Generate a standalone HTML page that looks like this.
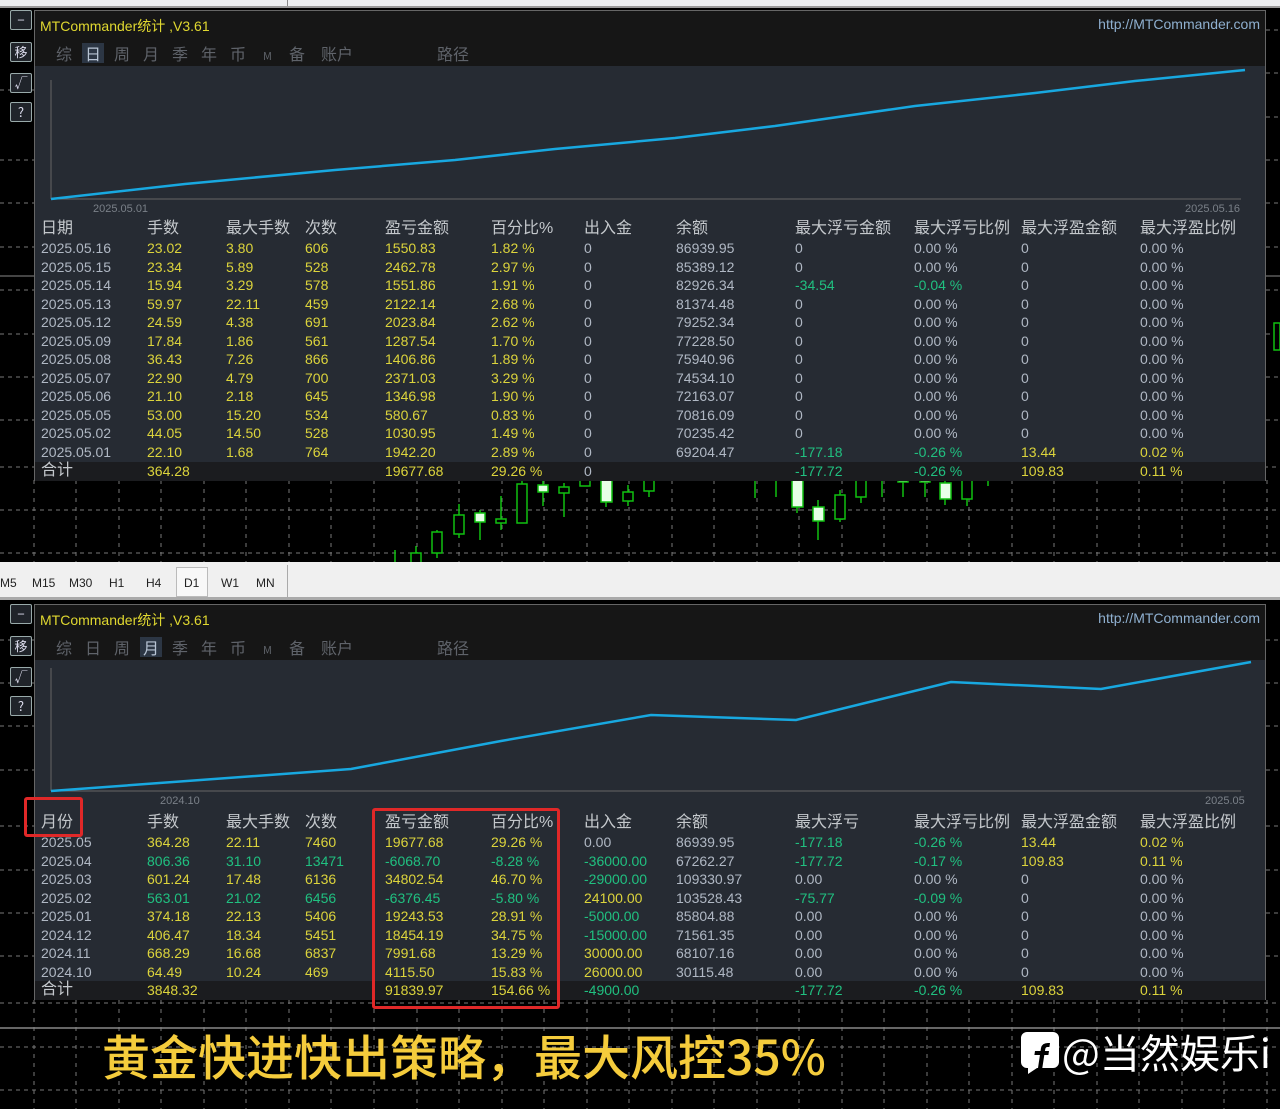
<!DOCTYPE html>
<html><head><meta charset="utf-8"><style>
*{margin:0;padding:0;box-sizing:border-box}
body{width:1280px;height:1109px;background:#000;position:relative;overflow:hidden;font-family:"Liberation Sans","Noto Sans CJK SC",sans-serif}
.a{position:absolute}
.panel{position:absolute;left:34px;width:1232px;background:#262b33;border:1px solid #666}
.hdr{position:absolute;left:0;top:0;width:100%;height:55px;background:#161616}
.title{position:absolute;left:5px;top:5px;color:#e0d830;font-size:14px}
.url{position:absolute;right:5px;top:5px;color:#8fb0d0;font-size:14px}
.tab{position:absolute;top:32px;color:#5f636a;font-size:16px;font-family:"Noto Sans CJK SC",sans-serif;line-height:20px}
.tab.on{background:#2c3644;color:#b8c4d4;padding:0 3px;margin-left:-3px}
.row{position:absolute;left:0;width:100%;height:18.5px;font-size:14px;line-height:18.5px;color:#b0b8c4}
.row span{position:absolute;top:0;white-space:nowrap}
.h{font-family:"Liberation Sans","Noto Sans CJK SC",sans-serif;font-size:16px;color:#c4c8cc}
.tot{background:#1b1c1f}
.y{color:#dcd43c}.g{color:#20c080}
.c1{left:6px}.c2{left:112px}.c3{left:191px}.c4{left:270px}.c5{left:350px}.c6{left:456px}.c7{left:549px}.c8{left:641px}.c9{left:760px}.c10{left:879px}.c11{left:986px}.c12{left:1105px}
.btn{position:absolute;left:10px;width:22px;height:20px;border:1px solid #9aa;border-radius:2px;background:#20242a;color:#dde;font-size:13px;text-align:center;line-height:18px;font-family:"Noto Sans CJK SC",sans-serif}
.tb{position:absolute;top:576px;font-size:12px;color:#222}
</style></head><body>
<svg class="a" style="left:0;top:0" width="1280" height="1109">
<g stroke="#777" stroke-dasharray="4,4" stroke-width="1">
<line x1="0" y1="467" x2="1280" y2="467"/><line x1="0" y1="510" x2="1280" y2="510"/><line x1="0" y1="553" x2="1280" y2="553"/>
<line x1="0" y1="90" x2="34" y2="90"/><line x1="0" y1="160" x2="34" y2="160"/><line x1="0" y1="203" x2="34" y2="203"/><line x1="0" y1="247" x2="34" y2="247"/><line x1="0" y1="290" x2="34" y2="290"/><line x1="0" y1="334" x2="34" y2="334"/><line x1="0" y1="377" x2="34" y2="377"/><line x1="0" y1="420" x2="34" y2="420"/>
<line x1="1266" y1="30" x2="1280" y2="30"/><line x1="1266" y1="73" x2="1280" y2="73"/><line x1="1266" y1="117" x2="1280" y2="117"/><line x1="1266" y1="160" x2="1280" y2="160"/><line x1="1266" y1="203" x2="1280" y2="203"/><line x1="1266" y1="247" x2="1280" y2="247"/><line x1="1266" y1="290" x2="1280" y2="290"/><line x1="1266" y1="334" x2="1280" y2="334"/><line x1="1266" y1="377" x2="1280" y2="377"/><line x1="1266" y1="420" x2="1280" y2="420"/>
<line x1="0" y1="640" x2="34" y2="640"/><line x1="0" y1="683" x2="34" y2="683"/><line x1="0" y1="726" x2="34" y2="726"/><line x1="0" y1="770" x2="34" y2="770"/><line x1="0" y1="826" x2="34" y2="826"/><line x1="0" y1="870" x2="34" y2="870"/><line x1="0" y1="913" x2="34" y2="913"/><line x1="0" y1="956" x2="34" y2="956"/>
<line x1="1266" y1="640" x2="1280" y2="640"/><line x1="1266" y1="683" x2="1280" y2="683"/><line x1="1266" y1="726" x2="1280" y2="726"/><line x1="1266" y1="770" x2="1280" y2="770"/><line x1="1266" y1="826" x2="1280" y2="826"/><line x1="1266" y1="870" x2="1280" y2="870"/><line x1="1266" y1="913" x2="1280" y2="913"/><line x1="1266" y1="956" x2="1280" y2="956"/>
<line x1="0" y1="1003" x2="1280" y2="1003"/><line x1="0" y1="1047" x2="1280" y2="1047"/><line x1="0" y1="1090" x2="1280" y2="1090"/>
</g>
<g stroke="#777" stroke-dasharray="4,5" stroke-width="1">
<line x1="34" y1="480" x2="34" y2="562"/><line x1="76" y1="480" x2="76" y2="562"/><line x1="119" y1="480" x2="119" y2="562"/><line x1="161" y1="480" x2="161" y2="562"/><line x1="204" y1="480" x2="204" y2="562"/><line x1="246" y1="480" x2="246" y2="562"/><line x1="289" y1="480" x2="289" y2="562"/><line x1="331" y1="480" x2="331" y2="562"/><line x1="374" y1="480" x2="374" y2="562"/><line x1="417" y1="480" x2="417" y2="562"/><line x1="459" y1="480" x2="459" y2="562"/><line x1="502" y1="480" x2="502" y2="562"/><line x1="544" y1="480" x2="544" y2="562"/><line x1="587" y1="480" x2="587" y2="562"/><line x1="629" y1="480" x2="629" y2="562"/><line x1="672" y1="480" x2="672" y2="562"/><line x1="714" y1="480" x2="714" y2="562"/><line x1="757" y1="480" x2="757" y2="562"/><line x1="799" y1="480" x2="799" y2="562"/><line x1="842" y1="480" x2="842" y2="562"/><line x1="884" y1="480" x2="884" y2="562"/><line x1="927" y1="480" x2="927" y2="562"/><line x1="969" y1="480" x2="969" y2="562"/><line x1="1012" y1="480" x2="1012" y2="562"/><line x1="1054" y1="480" x2="1054" y2="562"/><line x1="1097" y1="480" x2="1097" y2="562"/><line x1="1139" y1="480" x2="1139" y2="562"/><line x1="1182" y1="480" x2="1182" y2="562"/><line x1="1224" y1="480" x2="1224" y2="562"/><line x1="1267" y1="480" x2="1267" y2="562"/>
</g>
<g stroke="#777" stroke-dasharray="4,5" stroke-width="1">
<line x1="34" y1="1000" x2="34" y2="1109"/><line x1="76" y1="1000" x2="76" y2="1109"/><line x1="119" y1="1000" x2="119" y2="1109"/><line x1="161" y1="1000" x2="161" y2="1109"/><line x1="204" y1="1000" x2="204" y2="1109"/><line x1="246" y1="1000" x2="246" y2="1109"/><line x1="289" y1="1000" x2="289" y2="1109"/><line x1="331" y1="1000" x2="331" y2="1109"/><line x1="374" y1="1000" x2="374" y2="1109"/><line x1="417" y1="1000" x2="417" y2="1109"/><line x1="459" y1="1000" x2="459" y2="1109"/><line x1="502" y1="1000" x2="502" y2="1109"/><line x1="544" y1="1000" x2="544" y2="1109"/><line x1="587" y1="1000" x2="587" y2="1109"/><line x1="629" y1="1000" x2="629" y2="1109"/><line x1="672" y1="1000" x2="672" y2="1109"/><line x1="714" y1="1000" x2="714" y2="1109"/><line x1="757" y1="1000" x2="757" y2="1109"/><line x1="799" y1="1000" x2="799" y2="1109"/><line x1="842" y1="1000" x2="842" y2="1109"/><line x1="884" y1="1000" x2="884" y2="1109"/><line x1="927" y1="1000" x2="927" y2="1109"/><line x1="969" y1="1000" x2="969" y2="1109"/><line x1="1012" y1="1000" x2="1012" y2="1109"/><line x1="1054" y1="1000" x2="1054" y2="1109"/><line x1="1097" y1="1000" x2="1097" y2="1109"/><line x1="1139" y1="1000" x2="1139" y2="1109"/><line x1="1182" y1="1000" x2="1182" y2="1109"/><line x1="1224" y1="1000" x2="1224" y2="1109"/><line x1="1267" y1="1000" x2="1267" y2="1109"/>
</g>
<line x1="0" y1="1028" x2="1280" y2="1028" stroke="#888" stroke-width="1.5"/>
<line x1="0" y1="276" x2="34" y2="276" stroke="#888"/><line x1="1266" y1="276" x2="1280" y2="276" stroke="#888"/>
<g stroke="#10c010" stroke-width="1.5" fill="#000">
<line x1="395" y1="550" x2="395" y2="563"/>
<rect x="411" y="553" width="10" height="10"/><line x1="416" y1="546" x2="416" y2="553"/>
<line x1="437" y1="530" x2="437" y2="558"/><rect x="432" y="532" width="10" height="21"/>
<line x1="459" y1="504" x2="459" y2="538"/><rect x="454" y="515" width="10" height="19"/>
<line x1="480" y1="510" x2="480" y2="540"/><rect x="475" y="513" width="10" height="9" fill="#e8ffe8"/>
<line x1="501" y1="496" x2="501" y2="530"/><rect x="496" y="519" width="10" height="4"/>
<line x1="522" y1="481" x2="522" y2="523"/><rect x="517" y="484" width="10" height="39"/>
<line x1="543" y1="481" x2="543" y2="506"/><rect x="538" y="485" width="10" height="7" fill="#e8ffe8"/>
<line x1="564" y1="483" x2="564" y2="517"/><rect x="559" y="487" width="10" height="6"/>
<rect x="580" y="478" width="10" height="8"/>
<line x1="606" y1="480" x2="606" y2="507"/><rect x="601" y="480" width="11" height="22" fill="#e8ffe8"/>
<line x1="628" y1="485" x2="628" y2="506"/><rect x="623" y="492" width="10" height="9"/>
<line x1="649" y1="480" x2="649" y2="497"/><rect x="644" y="478" width="10" height="13"/>
<line x1="755" y1="480" x2="755" y2="498"/><line x1="776" y1="480" x2="776" y2="497"/>
<line x1="797" y1="480" x2="797" y2="513"/><rect x="792" y="480" width="11" height="27" fill="#e8ffe8"/>
<line x1="818" y1="500" x2="818" y2="540"/><rect x="813" y="507" width="11" height="14" fill="#e8ffe8"/>
<line x1="840" y1="490" x2="840" y2="522"/><rect x="835" y="495" width="10" height="24"/>
<line x1="861" y1="480" x2="861" y2="503"/><rect x="856" y="478" width="10" height="19"/>
<line x1="882" y1="480" x2="882" y2="497"/>
<line x1="903" y1="480" x2="903" y2="497"/><rect x="898" y="478" width="10" height="4" fill="#e8ffe8"/>
<line x1="925" y1="480" x2="925" y2="497"/><rect x="920" y="478" width="10" height="4" fill="#e8ffe8"/>
<line x1="945" y1="480" x2="945" y2="505"/><rect x="940" y="483" width="11" height="16" fill="#e8ffe8"/>
<line x1="967" y1="480" x2="967" y2="506"/><rect x="962" y="478" width="10" height="21"/>
<line x1="988" y1="480" x2="988" y2="486"/>
<rect x="1274" y="323" width="6" height="27"/>
</g>
</svg>

<div class="a" style="left:0;top:0;width:1280px;height:8px;background:#eceef0;border-bottom:2px solid #999"></div>
<div class="a" style="left:287px;top:0;width:1px;height:6px;background:#888"></div>

<div class="a" style="left:0;top:562px;width:1280px;height:38px;background:#f0f0f0;border-bottom:3px solid #aaa"></div>
<div class="a" style="left:287px;top:565px;width:1px;height:32px;background:#aaa"></div>
<div class="a" style="left:176px;top:567px;width:32px;height:30px;border:1px solid #bbb;background:#f8f8f8"></div>
<span class="tb" style="left:0">M5</span><span class="tb" style="left:32px">M15</span><span class="tb" style="left:69px">M30</span><span class="tb" style="left:109px">H1</span><span class="tb" style="left:146px">H4</span><span class="tb" style="left:184px">D1</span><span class="tb" style="left:221px">W1</span><span class="tb" style="left:256px">MN</span>

<div class="btn" style="top:10px">−</div><div class="btn" style="top:42px">移</div><div class="btn" style="top:73px">√</div><div class="btn" style="top:102px">?</div>
<div class="btn" style="top:604px">−</div><div class="btn" style="top:636px">移</div><div class="btn" style="top:667px">√</div><div class="btn" style="top:696px">?</div>

<div class="panel" style="top:10px;height:471px">
<div class="hdr"></div>
<div class="title">MTCommander统计 ,V3.61</div>
<div class="url">http://MTCommander.com</div>
<span class="tab" style="left:21px">综</span><span class="tab on" style="left:50px">日</span><span class="tab" style="left:79px">周</span><span class="tab" style="left:108px">月</span><span class="tab" style="left:137px">季</span><span class="tab" style="left:166px">年</span><span class="tab" style="left:195px">币</span><span class="tab" style="left:228px;font-size:11px;top:35px">M</span><span class="tab" style="left:254px">备</span><span class="tab" style="left:286px">账户</span><span class="tab" style="left:402px">路径</span>
<svg class="a" style="left:0;top:55px" width="1232" height="160">
<line x1="16" y1="14" x2="16" y2="133" stroke="#666"/><line x1="16" y1="133" x2="1206" y2="133" stroke="#666"/>
<polyline fill="none" stroke="#18a8e0" stroke-width="2.5" points="16,133 150,118 300,104 420,94 520,83 640,72 740,60 880,40 1000,27 1100,15 1210,4"/>
<text x="58" y="146" fill="#7a8088" font-size="11" font-family="Liberation Sans">2025.05.01</text>
<text x="1150" y="146" fill="#7a8088" font-size="11" font-family="Liberation Sans">2025.05.16</text>
</svg>
<div class="row h" style="top:209px"><span class="c1">日期</span><span class="c2">手数</span><span class="c3">最大手数</span><span class="c4">次数</span><span class="c5">盈亏金额</span><span class="c6">百分比%</span><span class="c7">出入金</span><span class="c8">余额</span><span class="c9">最大浮亏金额</span><span class="c10">最大浮亏比例</span><span class="c11">最大浮盈金额</span><span class="c12">最大浮盈比例</span></div>
<div class="row" style="top:228px"><span class="c1">2025.05.16</span><span class="c2 y">23.02</span><span class="c3 y">3.80</span><span class="c4 y">606</span><span class="c5 y">1550.83</span><span class="c6 y">1.82 %</span><span class="c7">0</span><span class="c8">86939.95</span><span class="c9">0</span><span class="c10">0.00 %</span><span class="c11">0</span><span class="c12">0.00 %</span></div>
<div class="row" style="top:246.5px"><span class="c1">2025.05.15</span><span class="c2 y">23.34</span><span class="c3 y">5.89</span><span class="c4 y">528</span><span class="c5 y">2462.78</span><span class="c6 y">2.97 %</span><span class="c7">0</span><span class="c8">85389.12</span><span class="c9">0</span><span class="c10">0.00 %</span><span class="c11">0</span><span class="c12">0.00 %</span></div>
<div class="row" style="top:265px"><span class="c1">2025.05.14</span><span class="c2 y">15.94</span><span class="c3 y">3.29</span><span class="c4 y">578</span><span class="c5 y">1551.86</span><span class="c6 y">1.91 %</span><span class="c7">0</span><span class="c8">82926.34</span><span class="c9 g">-34.54</span><span class="c10 g">-0.04 %</span><span class="c11">0</span><span class="c12">0.00 %</span></div>
<div class="row" style="top:283.5px"><span class="c1">2025.05.13</span><span class="c2 y">59.97</span><span class="c3 y">22.11</span><span class="c4 y">459</span><span class="c5 y">2122.14</span><span class="c6 y">2.68 %</span><span class="c7">0</span><span class="c8">81374.48</span><span class="c9">0</span><span class="c10">0.00 %</span><span class="c11">0</span><span class="c12">0.00 %</span></div>
<div class="row" style="top:302px"><span class="c1">2025.05.12</span><span class="c2 y">24.59</span><span class="c3 y">4.38</span><span class="c4 y">691</span><span class="c5 y">2023.84</span><span class="c6 y">2.62 %</span><span class="c7">0</span><span class="c8">79252.34</span><span class="c9">0</span><span class="c10">0.00 %</span><span class="c11">0</span><span class="c12">0.00 %</span></div>
<div class="row" style="top:320.5px"><span class="c1">2025.05.09</span><span class="c2 y">17.84</span><span class="c3 y">1.86</span><span class="c4 y">561</span><span class="c5 y">1287.54</span><span class="c6 y">1.70 %</span><span class="c7">0</span><span class="c8">77228.50</span><span class="c9">0</span><span class="c10">0.00 %</span><span class="c11">0</span><span class="c12">0.00 %</span></div>
<div class="row" style="top:339px"><span class="c1">2025.05.08</span><span class="c2 y">36.43</span><span class="c3 y">7.26</span><span class="c4 y">866</span><span class="c5 y">1406.86</span><span class="c6 y">1.89 %</span><span class="c7">0</span><span class="c8">75940.96</span><span class="c9">0</span><span class="c10">0.00 %</span><span class="c11">0</span><span class="c12">0.00 %</span></div>
<div class="row" style="top:357.5px"><span class="c1">2025.05.07</span><span class="c2 y">22.90</span><span class="c3 y">4.79</span><span class="c4 y">700</span><span class="c5 y">2371.03</span><span class="c6 y">3.29 %</span><span class="c7">0</span><span class="c8">74534.10</span><span class="c9">0</span><span class="c10">0.00 %</span><span class="c11">0</span><span class="c12">0.00 %</span></div>
<div class="row" style="top:376px"><span class="c1">2025.05.06</span><span class="c2 y">21.10</span><span class="c3 y">2.18</span><span class="c4 y">645</span><span class="c5 y">1346.98</span><span class="c6 y">1.90 %</span><span class="c7">0</span><span class="c8">72163.07</span><span class="c9">0</span><span class="c10">0.00 %</span><span class="c11">0</span><span class="c12">0.00 %</span></div>
<div class="row" style="top:394.5px"><span class="c1">2025.05.05</span><span class="c2 y">53.00</span><span class="c3 y">15.20</span><span class="c4 y">534</span><span class="c5 y">580.67</span><span class="c6 y">0.83 %</span><span class="c7">0</span><span class="c8">70816.09</span><span class="c9">0</span><span class="c10">0.00 %</span><span class="c11">0</span><span class="c12">0.00 %</span></div>
<div class="row" style="top:413px"><span class="c1">2025.05.02</span><span class="c2 y">44.05</span><span class="c3 y">14.50</span><span class="c4 y">528</span><span class="c5 y">1030.95</span><span class="c6 y">1.49 %</span><span class="c7">0</span><span class="c8">70235.42</span><span class="c9">0</span><span class="c10">0.00 %</span><span class="c11">0</span><span class="c12">0.00 %</span></div>
<div class="row" style="top:431.5px"><span class="c1">2025.05.01</span><span class="c2 y">22.10</span><span class="c3 y">1.68</span><span class="c4 y">764</span><span class="c5 y">1942.20</span><span class="c6 y">2.89 %</span><span class="c7">0</span><span class="c8">69204.47</span><span class="c9 g">-177.18</span><span class="c10 g">-0.26 %</span><span class="c11 y">13.44</span><span class="c12 y">0.02 %</span></div>
<div class="row tot" style="top:450.5px;height:19px"><span class="c1 h" style="font-size:16px">合计</span><span class="c2 y">364.28</span><span class="c5 y">19677.68</span><span class="c6 y">29.26 %</span><span class="c7">0</span><span class="c9 g">-177.72</span><span class="c10 g">-0.26 %</span><span class="c11 y">109.83</span><span class="c12 y">0.11 %</span></div>
</div>

<div class="panel" style="top:604px;height:396px">
<div class="hdr"></div>
<div class="title">MTCommander统计 ,V3.61</div>
<div class="url">http://MTCommander.com</div>
<span class="tab" style="left:21px">综</span><span class="tab" style="left:50px">日</span><span class="tab" style="left:79px">周</span><span class="tab on" style="left:108px">月</span><span class="tab" style="left:137px">季</span><span class="tab" style="left:166px">年</span><span class="tab" style="left:195px">币</span><span class="tab" style="left:228px;font-size:11px;top:35px">M</span><span class="tab" style="left:254px">备</span><span class="tab" style="left:286px">账户</span><span class="tab" style="left:402px">路径</span>
<svg class="a" style="left:0;top:55px" width="1232" height="150">
<line x1="16" y1="8" x2="16" y2="131" stroke="#666"/><line x1="16" y1="131" x2="1206" y2="131" stroke="#666"/>
<polyline fill="none" stroke="#18a8e0" stroke-width="2.5" points="16,131 316,109 466,81 616,55 761,60 916,22 1066,29 1216,2"/>
<text x="125" y="144" fill="#7a8088" font-size="11" font-family="Liberation Sans">2024.10</text>
<text x="1170" y="144" fill="#7a8088" font-size="11" font-family="Liberation Sans">2025.05</text>
</svg>
<div class="row h" style="top:209px"><span class="c1">月份</span><span class="c2">手数</span><span class="c3">最大手数</span><span class="c4">次数</span><span class="c5">盈亏金额</span><span class="c6">百分比%</span><span class="c7">出入金</span><span class="c8">余额</span><span class="c9">最大浮亏</span><span class="c10">最大浮亏比例</span><span class="c11">最大浮盈金额</span><span class="c12">最大浮盈比例</span></div>
<div class="row" style="top:228px"><span class="c1">2025.05</span><span class="c2 y">364.28</span><span class="c3 y">22.11</span><span class="c4 y">7460</span><span class="c5 y">19677.68</span><span class="c6 y">29.26 %</span><span class="c7">0.00</span><span class="c8">86939.95</span><span class="c9 g">-177.18</span><span class="c10 g">-0.26 %</span><span class="c11 y">13.44</span><span class="c12 y">0.02 %</span></div>
<div class="row" style="top:246.5px"><span class="c1">2025.04</span><span class="c2 g">806.36</span><span class="c3 g">31.10</span><span class="c4 g">13471</span><span class="c5 g">-6068.70</span><span class="c6 g">-8.28 %</span><span class="c7 g">-36000.00</span><span class="c8">67262.27</span><span class="c9 g">-177.72</span><span class="c10 g">-0.17 %</span><span class="c11 y">109.83</span><span class="c12 y">0.11 %</span></div>
<div class="row" style="top:265px"><span class="c1">2025.03</span><span class="c2 y">601.24</span><span class="c3 y">17.48</span><span class="c4 y">6136</span><span class="c5 y">34802.54</span><span class="c6 y">46.70 %</span><span class="c7 g">-29000.00</span><span class="c8">109330.97</span><span class="c9">0.00</span><span class="c10">0.00 %</span><span class="c11">0</span><span class="c12">0.00 %</span></div>
<div class="row" style="top:283.5px"><span class="c1">2025.02</span><span class="c2 g">563.01</span><span class="c3 g">21.02</span><span class="c4 g">6456</span><span class="c5 g">-6376.45</span><span class="c6 g">-5.80 %</span><span class="c7 y">24100.00</span><span class="c8">103528.43</span><span class="c9 g">-75.77</span><span class="c10 g">-0.09 %</span><span class="c11">0</span><span class="c12">0.00 %</span></div>
<div class="row" style="top:302px"><span class="c1">2025.01</span><span class="c2 y">374.18</span><span class="c3 y">22.13</span><span class="c4 y">5406</span><span class="c5 y">19243.53</span><span class="c6 y">28.91 %</span><span class="c7 g">-5000.00</span><span class="c8">85804.88</span><span class="c9">0.00</span><span class="c10">0.00 %</span><span class="c11">0</span><span class="c12">0.00 %</span></div>
<div class="row" style="top:320.5px"><span class="c1">2024.12</span><span class="c2 y">406.47</span><span class="c3 y">18.34</span><span class="c4 y">5451</span><span class="c5 y">18454.19</span><span class="c6 y">34.75 %</span><span class="c7 g">-15000.00</span><span class="c8">71561.35</span><span class="c9">0.00</span><span class="c10">0.00 %</span><span class="c11">0</span><span class="c12">0.00 %</span></div>
<div class="row" style="top:339px"><span class="c1">2024.11</span><span class="c2 y">668.29</span><span class="c3 y">16.68</span><span class="c4 y">6837</span><span class="c5 y">7991.68</span><span class="c6 y">13.29 %</span><span class="c7 y">30000.00</span><span class="c8">68107.16</span><span class="c9">0.00</span><span class="c10">0.00 %</span><span class="c11">0</span><span class="c12">0.00 %</span></div>
<div class="row" style="top:357.5px"><span class="c1">2024.10</span><span class="c2 y">64.49</span><span class="c3 y">10.24</span><span class="c4 y">469</span><span class="c5 y">4115.50</span><span class="c6 y">15.83 %</span><span class="c7 y">26000.00</span><span class="c8">30115.48</span><span class="c9">0.00</span><span class="c10">0.00 %</span><span class="c11">0</span><span class="c12">0.00 %</span></div>
<div class="row tot" style="top:376px;height:19px"><span class="c1 h" style="font-size:16px">合计</span><span class="c2 y">3848.32</span><span class="c5 y">91839.97</span><span class="c6 y">154.66 %</span><span class="c7 g">-4900.00</span><span class="c9 g">-177.72</span><span class="c10 g">-0.26 %</span><span class="c11 y">109.83</span><span class="c12 y">0.11 %</span></div>
</div>

<div class="a" style="left:24px;top:797px;width:59px;height:40px;border:3px solid #e02828;border-radius:3px"></div>
<div class="a" style="left:372px;top:808px;width:188px;height:201px;border:3px solid #e02828;border-radius:3px"></div>

<div class="a" style="left:102px;top:1026px;font-family:'Noto Sans CJK SC',sans-serif;font-size:48px;font-weight:500;color:#f5cc3c;white-space:nowrap;line-height:56px">黄金快进快出策略，最大风控35%</div>
<svg class="a" style="left:1021px;top:1032px" width="38" height="42" viewBox="0 0 38 42">
<path d="M6 0 H32 A6 6 0 0 1 38 6 V30 A6 6 0 0 1 32 36 H16 L7 42 V36 H6 A6 6 0 0 1 0 30 V6 A6 6 0 0 1 6 0Z" fill="#fff"/>
<path d="M17 36 L20 16 Q21 11 27 11 L29 11 L28.4 15 L26.6 15 Q24.6 15 24.3 17 L23.9 19 H28 L27.4 23 H23.3 L21 38 Z M14 19 H24 L23.4 23 H13.4Z" fill="#000"/>
</svg>
<div class="a" style="left:1062px;top:1026px;font-family:'Noto Sans CJK SC',sans-serif;font-size:40px;color:#fff;white-space:nowrap;line-height:50px">@当然娱乐i</div>
</body></html>
